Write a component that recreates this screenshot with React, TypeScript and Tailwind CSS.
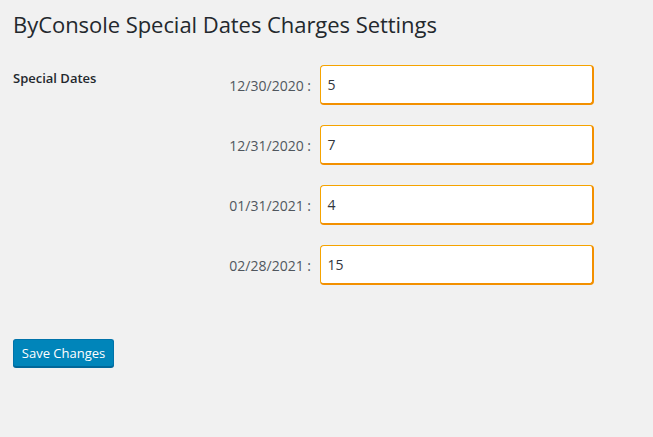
import React from "react";

const rows = [
  { date: "12/30/2020", value: "5" },
  { date: "12/31/2020", value: "7" },
  { date: "01/31/2021", value: "4" },
  { date: "02/28/2021", value: "15" },
];

export default function App() {
  return (
    <div
      className="w-[653px] h-[437px] bg-[#f1f1f1] pl-[13px] pt-[9px] overflow-hidden"
      style={{ fontFamily: '"Open Sans", "Noto Sans", sans-serif' }}
    >
      <h1 className="text-[22px] leading-[30px] text-[#23282d] font-normal tracking-[-0.05px]">
        ByConsole Special Dates Charges Settings
      </h1>
      <div className="flex mt-[26px]">
        <div className="w-[207px] pt-[4px] text-[13px] leading-[18px] font-semibold text-[#23282d]">
          Special Dates
        </div>
        <div className="flex flex-col gap-[20px]">
          {rows.map((r) => (
            <div key={r.date} className="flex items-center">
              <div className="w-[92px] text-right text-[14px] text-[#50575e] pr-[1px] whitespace-nowrap">
                {r.date} :
              </div>
              <div className="ml-[8px] w-[274px] h-[40px] bg-white border-[1.5px] border-[#f5a300] border-r-2 border-b-2 border-r-[#f39000] border-b-[#f39000] rounded-[4px] flex items-center pl-[6.5px] text-[14px] text-[#32373c]">
                {r.value}
              </div>
            </div>
          ))}
        </div>
      </div>
      <button className="mt-[54px] w-[101px] h-[28px] bg-[#0085ba] border border-[#0073aa] border-b-[#006799] rounded-[3px] text-white text-[13px] leading-[26px] shadow-[0_1px_0_#006799]">
        Save Changes
      </button>
    </div>
  );
}
